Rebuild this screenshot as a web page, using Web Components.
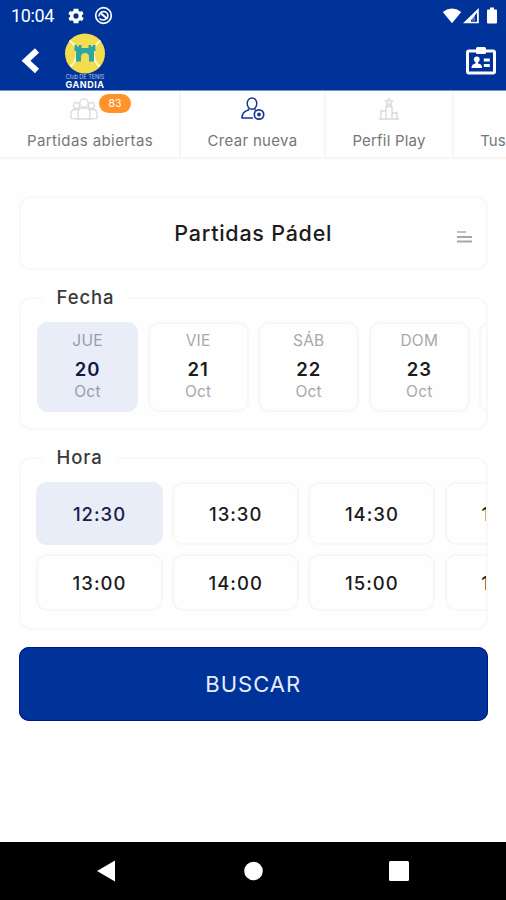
<!DOCTYPE html>
<html lang="es"><head><meta charset="utf-8"><title>Partidas</title>
<style>body{margin:0;background:#fefefe;font-family:Inter,"Liberation Sans",sans-serif}</style></head>
<body><match-app></match-app>
<script>
const define=(name,html)=>{
  const t=document.createElement('template');t.innerHTML=html;
  customElements.define(name,class extends HTMLElement{
    constructor(){super();this.attachShadow({mode:'open'}).append(t.content.cloneNode(true));}
  });
};

define('status-bar',`<style>
:host{display:flex;align-items:center;height:31px;box-sizing:border-box;padding:0 8px 0 11px;color:#fff;font:18px/31px Roboto,sans-serif}
svg{display:block}span{width:57px;letter-spacing:-.35px}i{flex:1}
</style><span>10:04</span>
<svg width="16" height="16" viewBox="2 2 20 20"><path fill="#fff" fill-rule="evenodd" d="M19.4 13a7 7 0 0 0 0-2l2.1-1.7-2-3.5-2.5 1a7 7 0 0 0-1.700-1L15 3H9l-.4 2.800a7 7 0 0 0-1.700 1l-2.500-1-2 3.500L4.600 11a7 7 0 0 0 0 2l-2.100 1.700 2 3.500 2.500-1a7 7 0 0 0 1.700 1L9 21h6l.4-2.800a7 7 0 0 0 1.700-1l2.500 1 2-3.500zM12 15.300a3.300 3.300 0 1 1 0-6.600 3.300 3.300 0 0 1 0 6.600z"/></svg>
<svg style="margin-left:10px" width="19" height="19" viewBox="0 0 19 19" fill="none" stroke="#fff"><circle cx="9.500" cy="9.500" r="7.800" stroke-width="1.700"/><path stroke-width="1.600" d="M5 10.500C5 6.500 8 5 11 5.800c3 1 3.600 4 2.300 6.200M5.500 12.500c2 2 5 1.800 6.500.2"/><path stroke-width="2.200" d="M7 7.500l6.500 5.500"/></svg>
<i></i>
<svg width="56" height="20" viewBox="0 0 56 20" fill="#fff"><path d="M.8 6Q10 -.8 19.200 6L10 17.300z"/><path fill-rule="evenodd" d="M36.800 2v15.200H21zM35 6.800l-6 7.500V15.700h6z"/><path d="M30 11.800l3-3.500v6.500h-3z" opacity=".35"/><path d="M47 3.500h2V1.500h4v2h2q1 0 1 1v12q0 1-1 1h-8q-1 0-1-1v-12q0-1 1-1z" transform="translate(-1 0)"/></svg>`);

define('club-logo',`<style>:host{display:flex;flex-direction:column;align-items:center;width:42px;color:#fff}
svg{display:block}span{font-size:5.500px;line-height:6px;white-space:nowrap;opacity:.7}b{font-size:9px;line-height:9px;font-weight:700;letter-spacing:.55px}</style>
<svg width="42" height="41" viewBox="0 0 42 41"><circle cx="21" cy="20.500" r="20" fill="#f2dc50"/><path d="M5.500 7.500q7 5 7 13 0 8-6 13M36.500 7.500q-7 5-7 13 0 8 6 13" fill="none" stroke="#fff9d5" stroke-width="2"/><path fill="#2ba6a5" d="M10.500 12h2.500v1.500h2V12h2.500v3h7v-3H27v1.500h2V12h2.500v6H30v10.500h-5V24q0-4-4-4t-4 4v4.500h-5V18h-1.500z"/></svg>
<span>Club DE TENIS</span><b>GANDIA</b>`);

define('app-bar',`<style>
:host{display:flex;height:60px;padding:0 10px 0 21px;box-sizing:border-box}
svg{display:block}club-logo{margin:2px 0 0 22px}i{flex:1}
</style>
<svg style="margin-top:16px" width="21" height="28" viewBox="0 0 21 28"><path d="M16 3.500 5 13.800 16 24" fill="none" stroke="#fff" stroke-width="6"/></svg>
<club-logo></club-logo><i></i>
<svg style="margin-top:15px" width="30" height="29" viewBox="0 0 30 29" fill="#fff"><rect x="1.500" y="5" width="27" height="22" rx="1.500" fill="none" stroke="#fff" stroke-width="3"/><rect x="10" y="1" width="10" height="7" rx="1.500"/><circle cx="10.800" cy="13.300" r="2.900"/><path d="M9.500 15h2.600v2.500q4 .3 4 4.500H5.500q0-4 4-4.500z"/><path d="M17.800 12.500h6v3h-6zM17.800 18h6v3h-6z"/></svg>`);

define('nav-tab',`<style>
:host{display:flex;flex-direction:column;align-items:center;flex:none;box-sizing:border-box;border-right:2px solid #f6f6f6;color:#777;position:relative}
.icon{height:26px;margin-top:6px}.label{margin-top:8px;font-size:15px;line-height:20px;white-space:nowrap;font-weight:400}
.badge{position:absolute;left:99px;top:3px}
</style><div class="icon"><slot name="icon"></slot></div><div class="label"><slot></slot></div><div class="badge"><slot name="badge"></slot></div>`);

define('count-badge',`<style>:host{display:block;width:32px;height:19px;border-radius:10px;background:#ff9228;color:#fff;font-size:10.500px;line-height:19px;text-align:center;letter-spacing:0}</style><slot></slot>`);

define('tab-strip',`<style>
:host{display:flex;height:68px;box-sizing:border-box;border-bottom:2px solid #f6f6f6;overflow:hidden}svg{display:block}
</style>
<nav-tab style="width:181px;padding-left:1px;letter-spacing:.4px"><svg slot="icon" style="margin-left:-13px" width="28" height="26" viewBox="0 0 28 26" fill="#fff" stroke="#dcdcdc" stroke-width="1.300"><circle cx="6.500" cy="8.500" r="3"/><circle cx="21.500" cy="8.500" r="3"/><path d="M1 21.500v-5q0-4 4-4h5v9.500zM27 21.500v-5q0-4-4-4h-5v9.500z"/><circle cx="14" cy="6" r="4.200"/><path d="M8 22v-6q0-5 4-5h4q4 0 4 5v6z"/></svg>Partidas abiertas<count-badge slot="badge">83</count-badge></nav-tab>
<nav-tab style="width:145px;letter-spacing:.3px"><svg slot="icon" width="26" height="26" viewBox="0 0 26 26" fill="none" stroke="#183696" stroke-width="1.500"><ellipse cx="12" cy="6.600" rx="4.800" ry="5.700"/><path d="M8.500 11.500v1.500q-6.500 1.500-6.500 8h11M15 11.500v2"/><circle cx="19" cy="17.500" r="4.700" fill="#fff" stroke-width="1.700"/><circle cx="19" cy="17.500" r="1.900" fill="#183696" stroke="none"/></svg>Crear nueva</nav-tab>
<nav-tab style="width:128px;letter-spacing:.2px"><svg slot="icon" width="22" height="26" viewBox="0 0 22 26" fill="none" stroke="#d8d8d8" stroke-width="1.300"><path d="M1 22h20M3 22v-8h5M8 22V9.500h6V22M14 16h5v6M11 1.500l1 2.200 2.500.3-1.800 1.700.5 2.400-2.200-1.200-2.200 1.200.5-2.400L7.500 4l2.500-.3z"/></svg>Perfil Play</nav-tab>
<nav-tab style="width:80px;letter-spacing:.1px"><span slot="icon"></span>Tus</nav-tab>`);

define('select-card',`<style>
:host{display:grid;grid-template-columns:1fr auto 1fr;align-items:center;height:74px;box-sizing:border-box;border:2px solid #f8f8f8;border-radius:11px;padding:0 14px;color:#1c1c1c;font-size:21.500px;font-weight:500}
span{grid-column:2;letter-spacing:.75px;margin-top:-1px}svg{justify-self:end;margin-top:7px}
</style><span><slot></slot></span><svg width="15" height="12" viewBox="0 0 15 12" fill="#a6a6a6"><path opacity=".7" d="M0 0h9v2H0z"/><path d="M0 5h15v2H0zM0 9.500h15v2H0z"/></svg>`);

define('field-group',`<style>
:host{display:block}
fieldset{margin:0;padding:0;min-width:0;height:100%;box-sizing:border-box;border:2px solid #f8f8f8;border-radius:12px;overflow:hidden}
legend{margin-left:22px;padding:0 14px;height:22px;font-size:18.500px;line-height:20px;font-weight:500;color:#3a3a3a;letter-spacing:.9px}
</style><fieldset><legend><slot name="legend"></slot></legend><slot></slot></fieldset>`);

define('day-cell',`<style>
:host{display:flex;flex:none;flex-direction:column;align-items:center;width:101px;height:90px;padding-top:7px;box-sizing:border-box;border:2px solid #f7f7f7;border-radius:11px;color:#a8a8a8;font-size:15.500px;line-height:20px;letter-spacing:.2px}
:host([selected]){background:#e9edf7;border-color:#e9edf7;color:#959cae;--num:#10174a}
b{font-size:18.500px;line-height:24px;font-weight:600;color:var(--num,#1c1c1c);margin:6px 0 1px;letter-spacing:.8px}
</style><span><slot name="day"></slot></span><b><slot></slot></b><span><slot name="month"></slot></span>`);

define('hour-cell',`<style>
:host{display:flex;align-items:center;justify-content:center;box-sizing:border-box;border:2px solid #f7f7f7;border-radius:11px;color:#1c1c1c;font-size:18.500px;font-weight:500;letter-spacing:1px}
:host([selected]){background:#e9edf7;border-color:#e9edf7;color:#1b2048}
</style><slot></slot>`);

define('primary-button',`<style>
:host{display:flex;align-items:center;justify-content:center;height:74px;border-radius:10px;background:#039;box-shadow:inset 0 0 0 1px #00168c;color:#e9ecff;font-size:22px;letter-spacing:1px}
</style><slot></slot>`);

define('system-nav',`<style>
:host{display:flex;align-items:center;height:58px;box-sizing:border-box;padding:0 97px 0 96px;justify-content:space-between;background:#000}
svg{display:block}
</style>
<svg width="20" height="22" viewBox="0 0 20 22"><path d="M1 11 19 .5v21z" fill="#fff"/></svg>
<svg width="20" height="20" viewBox="0 0 20 20"><circle cx="10.500" cy="10" r="9.300" fill="#fff"/></svg>
<svg width="20" height="20" viewBox="0 0 20 20"><rect width="20" height="20" rx="1.500" fill="#fff"/></svg>`);

define('match-app',`<style>
:host{display:flex;flex-direction:column;width:506px;height:900px;overflow:hidden}
header{height:91px;background:#039;border-bottom:1px solid #8390c8;flex:none;overflow:hidden;box-sizing:border-box}
tab-strip{flex:none}
main{flex:1;padding:37px 18px 0 18.500px}
.date{height:143px;margin-top:17px}
.hour{height:183px;margin-top:17px}
.days{display:flex;gap:9.600px;padding:13px 0 0 16.500px}
.hours{display:grid;grid:63px 57px / repeat(4,127px);gap:9px 9.200px;padding:13px 0 0 15.500px}
primary-button{margin-top:17px}
</style>
<header><status-bar></status-bar><app-bar></app-bar></header>
<tab-strip></tab-strip>
<main>
<select-card>Partidas Pádel</select-card>
<field-group class="date"><span slot="legend">Fecha</span><div class="days">
<day-cell selected><span slot="day">JUE</span>20<span slot="month">Oct</span></day-cell><day-cell><span slot="day">VIE</span>21<span slot="month">Oct</span></day-cell><day-cell><span slot="day">SÁB</span>22<span slot="month">Oct</span></day-cell><day-cell><span slot="day">DOM</span>23<span slot="month">Oct</span></day-cell><day-cell></day-cell></div></field-group>
<field-group class="hour"><span slot="legend">Hora</span><div class="hours">
<hour-cell selected>12:30</hour-cell><hour-cell>13:30</hour-cell><hour-cell>14:30</hour-cell><hour-cell>15:30</hour-cell>
<hour-cell>13:00</hour-cell><hour-cell>14:00</hour-cell><hour-cell>15:00</hour-cell><hour-cell>16:00</hour-cell></div></field-group>
<primary-button>BUSCAR</primary-button>
</main>
<system-nav></system-nav>`);
</script></body></html>
